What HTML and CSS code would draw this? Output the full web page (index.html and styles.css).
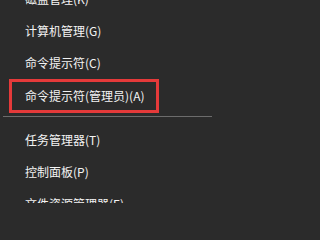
FILE: index.html
```html
<!DOCTYPE html>
<html lang="zh-CN">
<head>
<meta charset="utf-8">
<title>菜单</title>
<link rel="stylesheet" href="styles.css">
</head>
<body>
<ul class="menu">
  <li class="item">磁盘管理(K)</li>
  <li class="item">计算机管理(G)</li>
  <li class="item">命令提示符(C)</li>
  <li class="item item-marked">命令提示符(管理员)(A)</li>
  <li class="divider"></li>
  <li class="item">任务管理器(T)</li>
  <li class="item">控制面板(P)</li>
  <li class="item">文件资源管理器(E)</li>
</ul>
</body>
</html>
```
FILE: styles.css
```css
html, body {
  margin: 0;
  padding: 0;
  background: #2b2b2b;
  overflow: hidden;
}
body {
  width: 216px;
  height: 203px;
  font-family: "Noto Sans CJK SC", "Microsoft YaHei", sans-serif;
  font-size: 12px;
  color: #f3f3f3;
}
.menu {
  list-style: none;
  margin: -17px 0 0 0;
  padding: 0;
}
.item {
  height: 32px;
  line-height: 32px;
  padding-left: 25px;
  white-space: nowrap;
}
.item-marked {
  box-sizing: border-box;
  width: 150px;
  height: 34px;
  margin-left: 9px;
  padding-left: 13px;
  line-height: 28px;
  border: 3px solid #e53a3a;
}
.divider {
  height: 1px;
  background: #6c6c6c;
  margin: 3px 4px 7px 3px;
}
```
